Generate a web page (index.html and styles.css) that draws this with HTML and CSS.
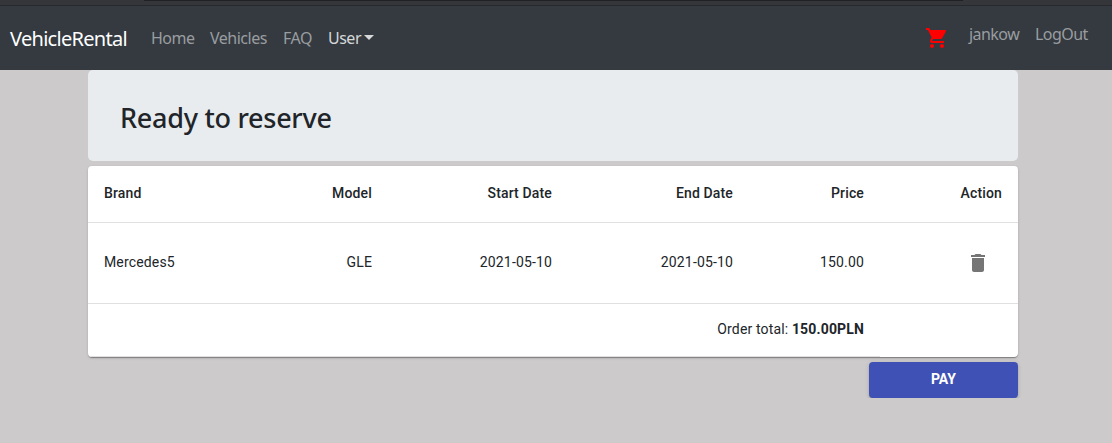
FILE: index.html
```html
<!DOCTYPE html>
<html lang="en">
<head>
<meta charset="utf-8">
<title>VehicleRental</title>
<link rel="stylesheet" href="styles.css">
</head>
<body>
<div class="chrome-strip"><div class="chrome-field"></div></div>
<nav class="navbar">
  <a class="brand">VehicleRental</a>
  <ul class="links">
    <li class="home">Home</li>
    <li class="vehicles">Vehicles</li>
    <li class="faq">FAQ</li>
    <li class="user">User<span class="caret"></span></li>
  </ul>
  <div class="account">
    <svg class="cart" viewBox="0 0 24 24"><path d="M7 18c-1.1 0-1.99.9-1.99 2S5.9 22 7 22s2-.9 2-2-.9-2-2-2zM1 2v2h2l3.6 7.59-1.35 2.45c-.16.28-.25.61-.25.96 0 1.1.9 2 2 2h12v-2H7.42c-.14 0-.25-.11-.25-.25l.03-.12.9-1.63h7.45c.75 0 1.41-.41 1.75-1.03l3.58-6.49c.08-.14.12-.31.12-.48 0-.55-.45-1-1-1H5.21l-.94-2H1zm16 16c-1.1 0-1.99.9-1.99 2s.89 2 1.99 2 2-.9 2-2-.9-2-2-2z"/></svg>
    <a class="jankow">jankow</a>
    <a class="logout">LogOut</a>
  </div>
</nav>
<main class="container">
  <header class="jumbo"><h1>Ready to reserve</h1></header>
  <div class="paper">
    <table class="orders">
      <colgroup><col class="c1"><col class="c2"><col class="c3"><col class="c4"><col class="c5"><col class="c6"></colgroup>
      <thead>
        <tr><th>Brand</th><th>Model</th><th>Start Date</th><th>End Date</th><th>Price</th><th>Action</th></tr>
      </thead>
      <tbody>
        <tr class="item"><td>Mercedes5</td><td>GLE</td><td>2021-05-10</td><td>2021-05-10</td><td>150.00</td>
          <td class="action"><svg class="trash" viewBox="0 0 24 24"><path d="M6 19c0 1.1.9 2 2 2h8c1.1 0 2-.9 2-2V7H6v12zM19 4h-3.5l-1-1h-5l-1 1H5v2h14V4z"/></svg></td></tr>
        <tr class="total"><td colspan="5">Order total: <b>150.00PLN</b></td><td></td></tr>
      </tbody>
    </table>
  </div>
  <div class="actions"><button class="pay">PAY</button></div>
</main>
</body>
</html>
```
FILE: styles.css
```css
* { box-sizing: border-box; }
body { margin: 0; background: #cccaca; color: #212529; font-family: "Noto Sans", sans-serif; }
.chrome-strip { height: 6px; background: #35363a; border-bottom: 1px solid #28292c; }
.chrome-field { width: 819px; height: 1px; margin-left: 144px; background: #202124; }
.navbar { display: flex; height: 64px; padding: 0 23px 0 10px; background: #343a40; color: #9a9da0; font-size: 16px; line-height: 24px; white-space: nowrap; }
.brand { width: 141px; padding-top: 18px; color: #fff; font-size: 20px; line-height: 30px; letter-spacing: -0.7px; }
.links { display: flex; margin: 0; padding: 20px 0 0; list-style: none; letter-spacing: -0.5px; }
.home { width: 59px; }
.vehicles { width: 73px; }
.faq { width: 45px; }
.user { color: #d6d8d9; }
.caret { display: inline-block; margin-left: 3px; vertical-align: 4px; border-top: 5px solid; border-left: 5px solid transparent; border-right: 5px solid transparent; }
.account { display: flex; margin-left: auto; padding-top: 16px; letter-spacing: -0.55px; }
.cart { width: 24px; height: 24px; margin: 4px 20px 0 0; fill: #f00; }
.jankow { width: 66px; }
.logout { width: 54px; }
.container { width: 930px; margin-left: 88px; font-family: Roboto, sans-serif; }
.jumbo { height: 91px; padding: 31px 32px 0; border-radius: 5px; background: #e8ecef; }
.jumbo h1 { margin: 0; font: 500 27px/34px "Noto Sans", sans-serif; letter-spacing: -0.27px; }
.paper { height: 191px; margin-top: 5px; border-radius: 4px; overflow: hidden; background: #fff; box-shadow: 0 2px 1px -1px rgba(0,0,0,.2), 0 1px 1px rgba(0,0,0,.14), 0 1px 3px rgba(0,0,0,.12); }
.orders { width: 100%; table-layout: fixed; border-collapse: separate; border-spacing: 0; font-size: 14px; letter-spacing: .15px; line-height: 20px; }
.c1 { width: 180px; }
.c2 { width: 120px; }
.c3 { width: 180px; }
.c4 { width: 181px; }
.c5 { width: 131px; }
.c6 { width: 138px; }
th, td { padding: 0 16px; text-align: right; border-bottom: 1px solid #e0e0e0; }
th:first-child, .item td:first-child { text-align: left; }
th { height: 57px; padding-bottom: 2px; font-weight: 500; }
.item td { height: 81px; padding-bottom: 2px; }
.total td { height: 53px; padding-bottom: 2px; }
.total td:last-child { border-bottom: 0; }
b { font-weight: 700; }
.action .trash { display: block; width: 24px; height: 24px; margin: 2px 12px 0 auto; fill: #757575; }
.actions { display: flex; justify-content: flex-end; padding-top: 5px; }
.pay { width: 149px; height: 36px; padding: 0 0 2px; border: 0; border-radius: 4px; background: #3f51b5; color: #fff; font: 700 14px/20px Roboto, sans-serif; letter-spacing: 0; box-shadow: 0 3px 1px -2px rgba(0,0,0,.2), 0 2px 2px rgba(0,0,0,.14), 0 1px 5px rgba(0,0,0,.12); }
```
